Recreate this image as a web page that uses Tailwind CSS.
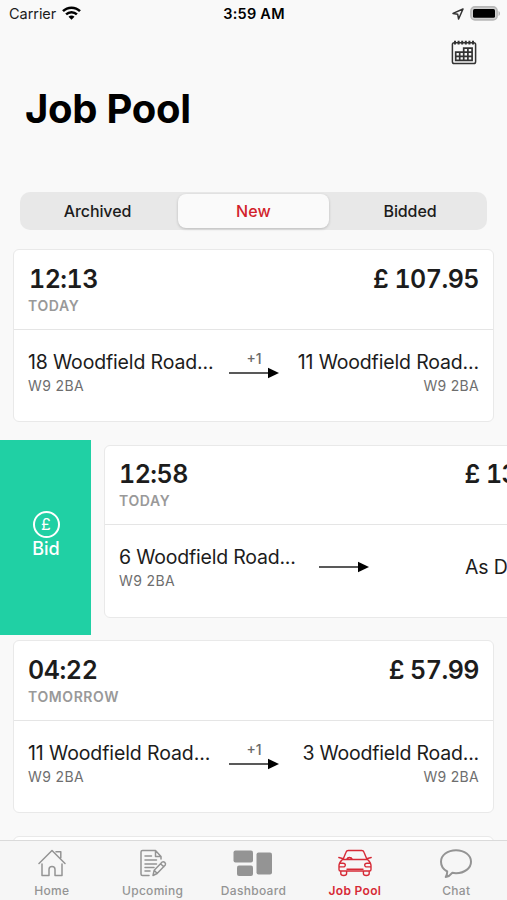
<!DOCTYPE html>
<html lang="en">
<head>
<meta charset="utf-8">
<title>Job Pool</title>
<script src="https://cdn.jsdelivr.net/npm/@tailwindcss/browser@4"></script>
</head>
<body class="bg-[#f9f9f9] font-['Inter',sans-serif] text-[#1c1c1c]">
<div class="relative flex h-[900px] w-[507px] flex-col overflow-hidden whitespace-nowrap">
  <header class="flex h-7 shrink-0 items-center justify-between pl-[9px] pr-[6px]">
    <div class="flex w-[160px] items-center gap-[6px] text-[14.5px] leading-7 tracking-[-0.05px]">
      <span>Carrier</span>
      <svg class="-mt-[2px]" width="19" height="14" viewBox="0 0 19 14" fill="none" stroke="#000" stroke-width="2.5"><path d="M1 5.2C5.7.5 13.3.5 18 5.2"/><path d="M4.1 8.3c3-2.9 7.8-2.9 10.8 0"/><path d="M9.5 13.7 6.5 10.7c1.7-1.5 4.3-1.5 6 0z" fill="#000" stroke="none"/></svg>
    </div>
    <div class="-ml-[2px] text-[14.5px] font-semibold leading-7 tracking-[0.25px] text-black">3:59 AM</div>
    <div class="flex w-[160px] items-center justify-end gap-[6px]">
      <svg width="12" height="12" viewBox="0 0 12 12" fill="none" stroke="#333" stroke-width="1.5" stroke-linejoin="round"><path d="M11 1 1 5.4l4.7.9.9 4.7z"/></svg>
      <svg class="-mt-[2px]" width="31" height="15" viewBox="0 0 31 15"><rect x=".9" y=".9" width="26.2" height="13" rx="4" fill="#d0d0d0" stroke="#b8b8b8" stroke-width="1.6"/><rect x="3" y="3" width="22" height="8.8" rx="1.5" fill="#000"/><path d="M28.5 5v5c2-.8 2-4.2 0-5z" fill="#b5b5b5"/></svg>
    </div>
  </header>
  <div class="flex h-[50px] shrink-0 justify-end pr-[30px] pt-[12px]">
    <svg width="26" height="26" viewBox="0 0 26 26" fill="none" stroke="#333" stroke-width="1.5"><rect x="1.4" y="2.8" width="23.2" height="20.700" rx="1.8"/><path d="M4 .8v3.600M7.600.8v3.600M11.200.8v3.600M14.800.8v3.600M18.400.8v3.600M22 .8v3.600" stroke-width="2"/><path d="M4.700 12.200h8V8.200h8.400v12.200H4.700zM4.700 16.300h16.400M12.700 12.200h8.400M8.700 12.200v8.200M12.700 12.200v8.200M16.900 8.200v12.200" stroke-width="1.7"/></svg>
  </div>
  <h1 class="h-[114px] shrink-0 pl-[25px] pt-[6px] text-[40px] font-bold leading-[50px] tracking-[-0.3px] text-black">Job Pool</h1>
  <div class="mx-5 flex h-[38px] shrink-0 items-center rounded-[10px] bg-[#e8e8e8] text-[16px] font-medium">
    <div class="w-[158px] pr-[3px] text-center leading-[38px] tracking-[-0.1px]">Archived</div>
    <div class="h-[34px] w-[151px] rounded-[8px] bg-[#fafafa] text-center leading-[34px] tracking-[0.2px] text-[#d21f2b] shadow-[0_1px_3px_rgba(0,0,0,0.2)]">New</div>
    <div class="flex-1 pl-[4px] text-center leading-[38px] tracking-[-0.1px]">Bidded</div>
  </div>

  <main class="mt-[14px] flex flex-col">
    <section class="h-[195.5px] shrink-0 px-[13px] pt-[5px]">
      <div class="h-[173px] rounded-[6px] border-[1.5px] border-[#e9e9e9] bg-white px-[14px]">
        <div class="-mx-[14px] flex h-[80px] justify-between border-b border-[#e5e5e5] px-[14px] pt-[13px]">
          <div><div class="pl-px text-[25px] font-semibold leading-[32px] tabular-nums tracking-[-0.5px]">12:13</div><div class="text-[14px] font-semibold leading-[21px] tracking-[0.6px] text-[#999]">TODAY</div></div>
          <div class="text-[25px] font-semibold leading-[32px] tabular-nums tracking-[-0.5px]">£ 107.95</div>
        </div>
        <div class="relative flex justify-between pt-[20px]">
          <div><div class="text-[19.5px] leading-[25px] tracking-[-0.15px]">18 Woodfield Road...</div><div class="text-[14px] leading-[22px] tracking-[0.4px] text-[#6e6e6e]">W9 2BA</div></div>
          <div class="absolute left-[201px] top-[20px] w-[50px] text-center text-[14px] font-medium leading-[17px] text-[#6a6a6a]">+1<svg class="-mt-[0.5px] block" width="50" height="12" viewBox="0 0 50 12"><path d="M0 6h41" stroke="#222" stroke-width="1.6"/><path d="M39 .8 50 6 39 11.2z" fill="#000"/></svg></div>
          <div class="text-right"><div class="text-[19.5px] leading-[25px] tracking-[-0.15px]">11 Woodfield Road...</div><div class="text-[14px] leading-[22px] tracking-[0.3px] text-[#6e6e6e]">W9 2BA</div></div>
        </div>
      </div>
    </section>

    <section class="flex h-[195.5px] shrink-0">
      <div class="flex w-[91px] shrink-0 flex-col items-center bg-[#20d0a4] pl-px pt-[71px] text-white">
        <div class="flex size-[27px] items-center justify-center rounded-full border-2 border-white text-[16px] leading-none">£</div>
        <div class="text-[18px] font-medium leading-[22px]">Bid</div>
      </div>
      <div class="ml-[13px] mt-[5px] h-[173px] w-[482px] shrink-0 rounded-[6px] border-[1.5px] border-[#e9e9e9] bg-white px-[14px]">
        <div class="-mx-[14px] flex h-[79.5px] justify-between border-b border-[#e5e5e5] px-[14px] pt-[12.5px]">
          <div><div class="text-[25px] font-semibold leading-[32px] tabular-nums tracking-[-0.5px]">12:58</div><div class="text-[14px] font-semibold leading-[21px] tracking-[0.6px] text-[#999]">TODAY</div></div>
          <div class="w-[106.5px] text-[25px] font-semibold leading-[32px] tabular-nums tracking-[-0.5px]">£ 13</div>
        </div>
        <div class="relative flex justify-between pt-[20px]">
          <div><div class="text-[19.5px] leading-[25px] tracking-[-0.2px]">6 Woodfield Road...</div><div class="text-[14px] leading-[22px] tracking-[0.4px] text-[#6e6e6e]">W9 2BA</div></div>
          <div class="absolute left-[200px] top-[36px] w-[50px]"><svg class="block" width="50" height="12" viewBox="0 0 50 12"><path d="M0 6h41" stroke="#222" stroke-width="1.6"/><path d="M39 .8 50 6 39 11.2z" fill="#000"/></svg></div>
          <div class="w-[106px] pt-[10px] text-[19.5px] leading-[25px] tracking-[-0.15px]">As D</div>
        </div>
      </div>
    </section>

    <section class="h-[195.5px] shrink-0 px-[13px] pt-[5px]">
      <div class="h-[173px] rounded-[6px] border-[1.5px] border-[#e9e9e9] bg-white px-[14px]">
        <div class="-mx-[14px] flex h-[80px] justify-between border-b border-[#e5e5e5] px-[14px] pt-[13px]">
          <div><div class="text-[25px] font-semibold leading-[32px] tabular-nums tracking-[-0.4px]">04:22</div><div class="text-[14px] font-semibold leading-[21px] tracking-[0.6px] text-[#999]">TOMORROW</div></div>
          <div class="text-[25px] font-semibold leading-[32px] tabular-nums tracking-[-0.5px]">£ 57.99</div>
        </div>
        <div class="relative flex justify-between pt-[20px]">
          <div><div class="text-[19.5px] leading-[25px] tracking-[-0.1px]">11 Woodfield Road...</div><div class="text-[14px] leading-[22px] tracking-[0.4px] text-[#6e6e6e]">W9 2BA</div></div>
          <div class="absolute left-[201px] top-[20px] w-[50px] text-center text-[14px] font-medium leading-[17px] text-[#6a6a6a]">+1<svg class="-mt-[0.5px] block" width="50" height="12" viewBox="0 0 50 12"><path d="M0 6h41" stroke="#222" stroke-width="1.6"/><path d="M39 .8 50 6 39 11.2z" fill="#000"/></svg></div>
          <div class="text-right"><div class="text-[19.5px] leading-[25px] tracking-[-0.2px]">3 Woodfield Road...</div><div class="text-[14px] leading-[22px] tracking-[0.3px] text-[#6e6e6e]">W9 2BA</div></div>
        </div>
      </div>
    </section>
    <section class="h-[60px] shrink-0 px-[13px] pt-[5px]"><div class="h-[173px] rounded-[6px] border-[1.5px] border-[#e9e9e9] bg-white"></div></section>
  </main>

  <nav class="absolute bottom-0 left-0 grid h-[60px] w-full grid-cols-5 border-t border-[#dadada] bg-[#f6f6f6] text-center text-[12px] font-medium leading-[16px] tracking-[0.3px] text-[#949494]">
    <div class="flex flex-col items-center pl-[2px] pt-[8px]">
      <svg width="28" height="28" viewBox="0 0 28 28" fill="none" stroke="#949494" stroke-width="1.5" stroke-linejoin="round" stroke-linecap="round"><path d="M1 14.500 14 1.500l13 13M18 2.800h4.800v6M4 15v11.500h7V20.500a3 3 0 0 1 6 0v6h7V15"/></svg>
      <span class="mt-[6px]">Home</span>
    </div>
    <div class="flex flex-col items-center pl-px pt-[8px]">
      <svg width="28" height="28" viewBox="0 0 28 28" fill="none" stroke="#949494" stroke-width="1.5" stroke-linejoin="round" stroke-linecap="round"><path d="M22 10V7.500l-5.500-6H3.500Q2 1.500 2 3v22q0 1.500 1.500 1.500H10M16.500 1.500v6H22M6 7h6.500M6 11h11.500M6 15h11.500M6 18.500h9M6 22h5"/><path d="m14 26.500 1.200-5.300 8-8.200q1.200-.8 2.500.4t.6 2.500l-8.200 8.600zM15.200 21.200l3 3.300M21.500 14.800l3.300 3"/></svg>
      <span class="mt-[6px]">Upcoming</span>
    </div>
    <div class="flex flex-col items-center pt-[8px]">
      <svg width="40" height="28" viewBox="0 0 40 28" fill="#949494"><rect x=".5" y="1.500" width="19.500" height="12" rx="2"/><rect x="4" y="16.500" width="16" height="10.500" rx="2"/><rect x="23.500" y="3.500" width="15.500" height="22" rx="2"/></svg>
      <span class="mt-[6px]">Dashboard</span>
    </div>
    <div class="flex flex-col items-center pt-[8px] font-semibold text-[#d62a36]">
      <svg width="34" height="28" viewBox="0 0 34 28" fill="none" stroke="#d62a36" stroke-width="1.400" stroke-linejoin="round" stroke-linecap="round"><path d="M5 10.500 8 3.200Q8.600 1.500 10.300 1.500h13.400q1.700 0 2.300 1.700l3 7.300M4.500 10.500h25M4.500 10.500Q1 13.500 1 16.500v4q0 1.500 1.500 1.500h29q1.500 0 1.500-1.500v-4q0-3-3.500-6M.8 8.500l3.700 1M33.200 8.500l-3.700 1M2.800 22v2.500q0 2 2.900 2t2.900-2V22M25.400 22v2.500q0 2 2.900 2t2.900-2V22M1.500 14.300H5q2.300 0 2.300 1.800T5 17.900H1.200M32.500 14.300H29q-2.300 0-2.300 1.800t2.300 1.800h3.800M9 20.200h16M8.500 10.500Q9.500 8.500 11.500 8.500t3 2"/></svg>
      <span class="mt-[6px]">Job Pool</span>
    </div>
    <div class="flex flex-col items-center pt-[8px]">
      <svg width="34" height="30" viewBox="0 0 34 30" fill="none" stroke="#949494" stroke-width="2" stroke-linejoin="round"><path d="M17 1.200c8.500 0 15 5 15 11.500s-6.500 11.500-15 11.500c-1.500 0-2.500-.1-3.800-.4-1.500 2-4 3.700-6.500 4.200 1-1.500 1.600-3.500 1.500-5.500C4.200 20.300 2 17 2 12.700 2 6.200 8.500 1.200 17 1.200z"/></svg>
      <span class="mt-[4px]">Chat</span>
    </div>
  </nav>
</div>
</body>
</html>
